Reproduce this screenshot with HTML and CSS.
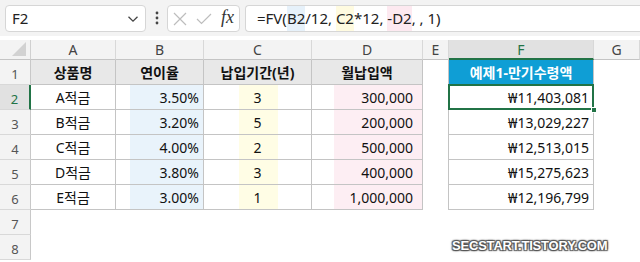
FILE: index.html
```html
<!DOCTYPE html>
<html lang="ko">
<head>
<meta charset="utf-8">
<link rel="stylesheet" href="styles.css">
</head>
<body>
<div class="toolbar">
  <div class="namebox">
    <span class="nb-text">F2</span>
    <svg class="chev" width="12" height="8" viewBox="0 0 12 8"><path d="M1.5 1.8 L6 6.2 L10.5 1.8" fill="none" stroke="#444" stroke-width="1.3"/></svg>
  </div>
  <svg class="dots" width="4" height="14" viewBox="0 0 4 14"><circle cx="2" cy="2" r="1.4" fill="#444"/><circle cx="2" cy="7" r="1.4" fill="#444"/><circle cx="2" cy="12" r="1.4" fill="#444"/></svg>
  <div class="fxbox">
    <svg width="14" height="14" viewBox="0 0 14 14"><path d="M1 1 L13 13 M13 1 L1 13" stroke="#bdbdbd" stroke-width="1.2" fill="none"/></svg>
    <svg width="16" height="12" viewBox="0 0 16 12"><path d="M1 6 L5.5 10.5 L15 1" stroke="#bdbdbd" stroke-width="1.2" fill="none"/></svg>
    <span class="fx">fx</span>
  </div>
  <div class="formula">=FV(<span class="hl hb">B2</span>/12, <span class="hl hy">C2</span>*12, <span class="hl hp">-D2</span>, , 1)</div>
</div>

<div class="sheet">
  <div class="corner"><svg width="16" height="15" viewBox="0 0 16 15"><path d="M15 0 L15 14 L1 14 Z" fill="#d2d2d2"/></svg></div>
  <div class="ch">A</div>
  <div class="ch">B</div>
  <div class="ch">C</div>
  <div class="ch">D</div>
  <div class="ch">E</div>
  <div class="ch ch-sel">F</div>
  <div class="ch">G</div>

  <div class="rh">1</div>
  <div class="c t th">상품명</div>
  <div class="c t th">연이율</div>
  <div class="c t th">납입기간(년)</div>
  <div class="c t th">월납입액</div>
  <div class="c e"></div>
  <div class="c t tf">예제1-만기수령액</div>
  <div class="c"></div>

  <div class="rh rh-sel">2</div>
  <div class="c t ctr">A적금</div>
  <div class="c t num fb">3.50%</div>
  <div class="c t ctr fy">3</div>
  <div class="c t num fp">300,000</div>
  <div class="c e"></div>
  <div class="c t num sel-cell">₩11,403,081<span class="sel"><span class="handle"></span></span></div>
  <div class="c"></div>

  <div class="rh">3</div>
  <div class="c t ctr">B적금</div>
  <div class="c t num fb">3.20%</div>
  <div class="c t ctr fy">5</div>
  <div class="c t num fp">200,000</div>
  <div class="c e"></div>
  <div class="c t num">₩13,029,227</div>
  <div class="c"></div>

  <div class="rh">4</div>
  <div class="c t ctr">C적금</div>
  <div class="c t num fb">4.00%</div>
  <div class="c t ctr fy">2</div>
  <div class="c t num fp">500,000</div>
  <div class="c e"></div>
  <div class="c t num">₩12,513,015</div>
  <div class="c"></div>

  <div class="rh">5</div>
  <div class="c t ctr">D적금</div>
  <div class="c t num fb">3.80%</div>
  <div class="c t ctr fy">3</div>
  <div class="c t num fp">400,000</div>
  <div class="c e"></div>
  <div class="c t num">₩15,275,623</div>
  <div class="c"></div>

  <div class="rh">6</div>
  <div class="c t ctr">E적금</div>
  <div class="c t num fb">3.00%</div>
  <div class="c t ctr fy">1</div>
  <div class="c t num fp">1,000,000</div>
  <div class="c e"></div>
  <div class="c t num">₩12,196,799</div>
  <div class="c"></div>

  <div class="rh">7</div>
  <div class="c"></div><div class="c"></div><div class="c"></div><div class="c"></div><div class="c"></div><div class="c"></div><div class="c"></div>

  <div class="rh">8</div>
  <div class="c"></div><div class="c"></div><div class="c"></div><div class="c"></div><div class="c"></div><div class="c"></div><div class="c"></div>

  <div class="watermark">SECSTART.TISTORY.COM</div>
</div>
</body>
</html>
```

FILE: styles.css
```css
* { box-sizing: border-box; }
html, body { margin: 0; padding: 0; background: #fff; }
body {
  width: 640px;
  height: 262px;
  overflow: hidden;
  font-family: "Noto Sans", "Noto Sans CJK KR", sans-serif;
  color: #222;
}

.toolbar {
  height: 36px;
  background: #f3f3f3;
  display: flex;
  align-items: flex-start;
  padding-top: 5px;
  padding-left: 5px;
}
.namebox {
  width: 141px;
  height: 27px;
  background: #fff;
  border: 1px solid #d6d6d6;
  border-radius: 4px;
  display: flex;
  align-items: center;
  justify-content: space-between;
  padding: 0 6px 0 6px;
  font-size: 15px;
}
.nb-text { line-height: 1; }
.dots { margin: 6px 0 0 9px; }
.fxbox {
  margin-left: 8px;
  width: 73px;
  height: 27px;
  background: #fff;
  border: 1px solid #d6d6d6;
  border-radius: 4px;
  display: flex;
  align-items: center;
  padding-left: 5px;
  gap: 9px;
}
.fx {
  font-family: "Liberation Serif", serif;
  font-style: italic;
  font-size: 18px;
  color: #333;
  line-height: 1;
  margin-top: -3px;
}
.formula {
  margin-left: 5px;
  flex: 1;
  height: 27px;
  background: #fff;
  border: 1px solid #d6d6d6;
  border-right: none;
  border-radius: 4px 0 0 4px;
  font-size: 15px;
  line-height: 25px;
  padding-left: 11px;
  white-space: pre;
  color: #222;
}
.hl { display: inline-block; height: 25px; }
.hb { background: #e6f1fa; }
.hy { background: #fffbe0; }
.hp { background: #fde9f0; }

.sheet {
  margin-top: 4px;
  display: grid;
  grid-template-columns: 31px 85px 88px 108px 111px 26px 145px 1fr;
  grid-template-rows: 20px repeat(8, 25px);
  position: relative;
}
.corner {
  background: #f3f3f3;
  border-right: 1px solid #d0d0d0;
  border-bottom: 1px solid #c4c4c4;
  display: flex;
  align-items: flex-end;
  justify-content: flex-end;
  padding: 0 3px 2px 0;
}
.corner svg { display: block; }
.ch {
  background: #f3f3f3;
  border-right: 1px solid #d8d8d8;
  border-bottom: 1px solid #c4c4c4;
  font-size: 14px;
  color: #444;
  display: flex;
  align-items: center;
  justify-content: center;
}
.ch-sel {
  background: #e1e1e1;
  border-bottom: 2px solid #217346;
  color: #217346;
}
.rh {
  background: #f3f3f3;
  border-right: 1px solid #c8c8c8;
  border-bottom: 1px solid #d8d8d8;
  font-size: 13px;
  color: #555;
  display: flex;
  align-items: center;
  justify-content: center;
  padding-top: 3px;
}
.rh-sel {
  background: #e1e1e1;
  border-right: 2px solid #217346;
  color: #217346;
}
.c {
  font-size: 14px;
  display: flex;
  align-items: center;
  white-space: nowrap;
  color: #111;
}
.t {
  border-right: 1px solid #c4c4c4;
  border-bottom: 1px solid #c4c4c4;
}
.e { border-right: 1px solid #c4c4c4; }
.th {
  background: #e8e8e8;
  font-weight: bold;
  justify-content: center;
}
.tf {
  background: #0f9ed5;
  color: #fff;
  font-weight: bold;
  justify-content: center;
}
.ctr { justify-content: center; }
.num { justify-content: flex-end; padding-right: 4px; }
.fb { background: linear-gradient(to right, transparent 14px, #e9f3fb 14px); }
.fy { background: linear-gradient(to right, transparent 35px, #fffde5 35px, #fffde5 74px, transparent 74px); }
.fp { background: linear-gradient(to right, transparent 22px, #fdeef3 22px); padding-right: 9px; }

.sel-cell { position: relative; }
.sel {
  position: absolute;
  top: -1px;
  left: -1px;
  right: -1px;
  bottom: -1px;
  border: 2px solid #217346;
}
.handle {
  position: absolute;
  right: -5px;
  bottom: -5px;
  width: 6px;
  height: 6px;
  background: #217346;
  border: 1px solid #fff;
}

.watermark {
  position: absolute;
  left: 452px;
  top: 198px;
  font-family: "Liberation Sans", sans-serif;
  font-weight: bold;
  font-size: 13px;
  color: #fff;
  letter-spacing: -0.2px;
  text-shadow: 0 0 1px #555, 1px 1px 1px #555, -1px -1px 1px #555, 1px -1px 1px #555, -1px 1px 1px #555, 0 0 3px #666;
}
```
